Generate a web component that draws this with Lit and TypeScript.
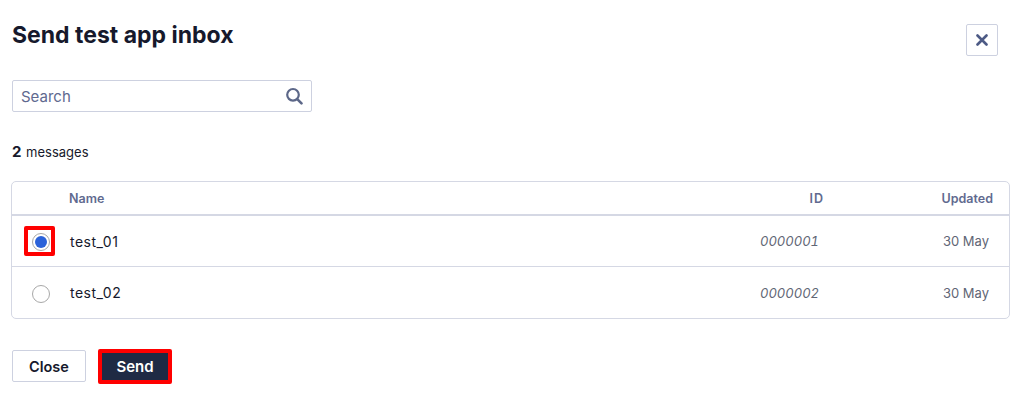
import { LitElement, html, css } from "lit";
import { customElement } from "lit/decorators.js";

const rows = [
  { name: "test_01", id: "0000001", updated: "30 May", selected: true },
  { name: "test_02", id: "0000002", updated: "30 May", selected: false },
];

@customElement("app-root")
export class AppRoot extends LitElement {
  static styles = css`
    :host { display: block; width: 1019px; height: 406px; box-sizing: border-box; padding: 0 9px 0 12px; background: #fff; font-family: Inter, sans-serif; color: #16192c; overflow: hidden; }
    .head { display: flex; justify-content: space-between; align-items: flex-start; height: 80px; }
    h1 { margin: 19px 0 0; font-size: 23px; line-height: 32px; font-weight: 700; color: #16192c; }
    .x { margin: 24px 12px 0 0; width: 32px; height: 32px; box-sizing: border-box; border: 1px solid #cdd1e0; border-radius: 2px; background: #fff; display: flex; align-items: center; justify-content: center; padding: 0; }
    .search { width: 300px; height: 32px; box-sizing: border-box; border: 1px solid #cdd1e0; border-radius: 2px; display: flex; align-items: center; justify-content: space-between; padding: 0 8px; font-size: 15px; color: #60698f; }
    .count { margin-top: 30px; font-size: 13px; line-height: 20px; color: #16192c; }
    .count b { font-size: 15px; margin-right: 1px; }
    .table { margin: 19px 0 0 -1px; width: 999px; box-sizing: border-box; border: 1px solid #d5d8e4; border-radius: 5px; }
    .row { display: grid; grid-template-columns: 58px 1fr 120px 170px; align-items: center; box-sizing: border-box; }
    .hd { height: 34px; border-bottom: 2px solid #d5d8e4; font-size: 12.5px; font-weight: 600; color: #616a8f; }
    .hd .name { margin-left: -1px; }
    .hd .id { text-align: right; padding-right: 15px; letter-spacing: 1px; }
    .hd .up { text-align: right; padding-right: 16px; }
    .bd { height: 51px; font-size: 13.5px; border-bottom: 1px solid #d5d8e4; }
    .bd:last-child { border-bottom: 0; }
    .bd .nm { font-size: 14px; letter-spacing: 0.5px; }
    .bd .id { font-size: 13px; font-style: italic; color: #5f6675; text-align: right; padding-right: 20px; font-variant-numeric: tabular-nums; }
    .bd .up { font-size: 13px; color: #5f6675; text-align: right; padding-right: 20px; }
    .cell { display: flex; align-items: center; }
    .radioWrap { margin-left: 20px; display: flex; align-items: center; }
    .radioWrap.hl { margin-left: 12px; width: 31px; height: 30px; box-sizing: border-box; border: 4px solid #f00; border-radius: 2px; padding-left: 4px; }
    .radio { margin-top: 2px; width: 18px; height: 18px; box-sizing: border-box; border: 1px solid #a8a8a8; border-radius: 50%; background: #fff; display: flex; align-items: center; justify-content: center; }
    .dot { width: 12px; height: 12px; border-radius: 50%; background: #2b62d9; }
    .actions { margin-top: 30px; display: flex; gap: 12px; align-items: flex-start; }
    .btn { box-sizing: border-box; border-radius: 2px; font: 600 14.5px Inter, sans-serif; display: flex; align-items: center; justify-content: center; padding: 0; }
    .close { margin-top: 1px; width: 74px; height: 32px; background: #fff; border: 1px solid #cdd1e0; color: #16192c; }
    .send { width: 74px; height: 35px; background: #1f2a44; border: 4px solid #f00; color: #fff; font-size: 15px; }
  `;

  render() {
    return html`
      <div class="head">
        <h1>Send test app inbox</h1>
        <button class="x" aria-label="Close">
          <svg width="12" height="12" viewBox="0 0 12 12"><path d="M1.5 1.5 10.5 10.5M10.5 1.5 1.5 10.5" stroke="#4d5a85" stroke-width="2.6" stroke-linecap="round"/></svg>
        </button>
      </div>
      <div class="search">
        <span>Search</span>
        <svg width="18" height="18" viewBox="0 0 18 18" fill="none"><circle cx="8" cy="7.8" r="5.8" stroke="#5c6788" stroke-width="2.2"/><path d="M12.5 12.3l4 4" stroke="#5c6788" stroke-width="2.6" stroke-linecap="round"/></svg>
      </div>
      <div class="count"><b>2</b> messages</div>
      <div class="table">
        <div class="row hd"><span></span><span class="name">Name</span><span class="id">ID</span><span class="up">Updated</span></div>
        ${rows.map(r => html`
          <div class="row bd">
            <div class="cell"><div class="radioWrap ${r.selected ? "hl" : ""}"><div class="radio">${r.selected ? html`<div class="dot"></div>` : ""}</div></div></div>
            <span class="nm">${r.name}</span><span class="id">${r.id}</span><span class="up">${r.updated}</span>
          </div>`)}
      </div>
      <div class="actions">
        <button class="btn close">Close</button>
        <button class="btn send">Send</button>
      </div>
    `;
  }
}
